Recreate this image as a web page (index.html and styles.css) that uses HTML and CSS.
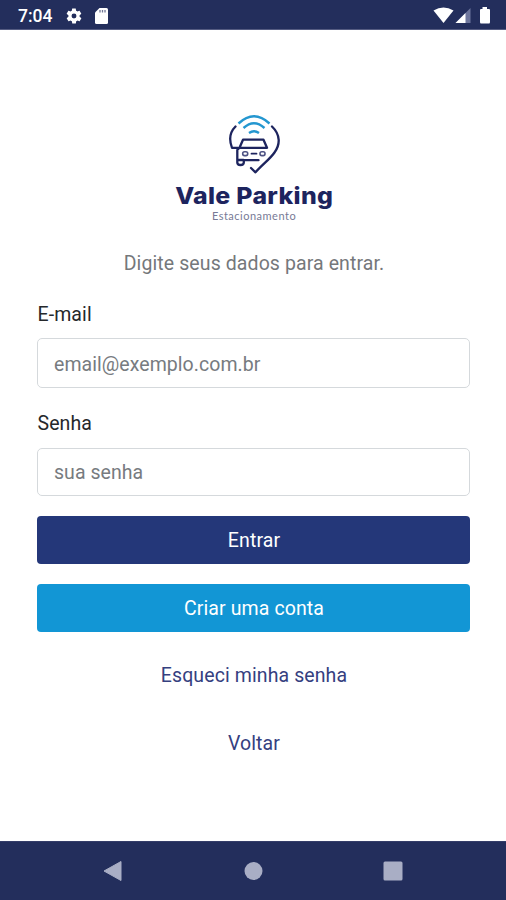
FILE: index.html
```
<!DOCTYPE html>
<html lang="pt-BR">
<head>
  <meta charset="UTF-8" />
  <meta name="viewport" content="width=device-width, initial-scale=1.0" />
  <title>Vale Parking</title>
  <link rel="stylesheet" href="styles.css">
</head>
<body>
  <div class="screen">
    <div class="status-bar">
      <span class="time">7:04</span>
      <svg class="gear" width="18" height="18" viewBox="0 0 24 24">
        <path fill="#fff" fill-rule="evenodd" d="M19.4 13c.1-.3.1-.7.1-1s0-.7-.1-1l2.1-1.6c.2-.2.2-.4.1-.6l-2-3.5c-.1-.2-.4-.3-.6-.2l-2.5 1c-.5-.4-1.1-.7-1.7-1l-.4-2.6c0-.3-.2-.5-.4-.5h-4c-.3 0-.5.2-.5.4l-.4 2.7c-.6.3-1.2.6-1.7 1l-2.5-1c-.2-.1-.5 0-.6.2l-2 3.5c-.1.2-.1.5.1.6L4.6 11c-.1.3-.1.7-.1 1s0 .7.1 1l-2.1 1.6c-.2.2-.2.4-.1.6l2 3.5c.1.2.4.3.6.2l2.5-1c.5.4 1.1.7 1.7 1l.4 2.6c0 .3.2.5.5.5h4c.2 0 .4-.2.4-.4l.4-2.7c.6-.3 1.2-.6 1.7-1l2.5 1c.2.1.5 0 .6-.2l2-3.5c.1-.2.1-.5-.1-.6zM12 15.3a3.3 3.3 0 1 1 0-6.6a3.3 3.3 0 1 1 0 6.6z" />
      </svg>
      <svg class="card" width="13" height="16" viewBox="0 0 13 16">
        <path fill="#fff" d="M4.5 0H11.5Q13 0 13 1.5V14.5Q13 16 11.5 16H1.5Q0 16 0 14.5V4.5z" />
        <path stroke="#232e5c" stroke-opacity=".65" stroke-width="1.3" d="M5 2V4.5M7.5 2V4.5M10 2V4.5" />
      </svg>
      <svg class="signals" width="58" height="18" viewBox="0 0 58 18">
        <path fill="#fff" d="M.5 3.5Q10.5 -2.5 20.5 3.5L10.5 16z" />
        <path fill="#6d759c" d="M37.5 1V16H22.5z" />
        <path fill="#fff" d="M32.5 6V16H22.5z" />
        <path fill="#fff" d="M49.5 0H54V2H56Q57 2 57 3V15Q57 16.5 56 16.5H48Q47 16.5 47 15V3Q47 2 48 2H49.5z" />
      </svg>
    </div>

    <div class="content">
      <div class="logo">
        <svg width="54" height="62" viewBox="0 0 54 62" fill="none" stroke-linecap="round" stroke-linejoin="round">
          <g stroke="#2497d0" stroke-width="2.4" stroke-linecap="butt">
            <path d="M11.5 9.5Q27 -5 42.5 9.5" />
            <path d="M16.5 14Q27 4.500 37.5 14" />
            <path d="M22 19Q27 15.500 32 19" />
          </g>
          <g stroke="#1d245e" stroke-width="2.3">
            <path d="M8.5 12.5C3 18 2 26 5 33.8H11" />
            <path d="M45 12.5C54 21 53 31 47.5 38.500C43 45 36 50 28.500 58.3L24 54" />
            <path d="M12.5 33.8L16 25.7H36.500L40 33.8H12.5L10.3 36V48.5Q10.3 51 13.5 51Q16.8 51 16.8 48.5V46.2H31.5M10.5 46H16.5" />
            <path stroke-width="1.8" d="M24.5 39.7H29.5" />
          </g>
          <g stroke="#4e5384" stroke-width="1.6">
            <rect x="15.7" y="37.800" width="5" height="3.8" rx="1.8" />
            <rect x="33" y="37.800" width="5" height="3.8" rx="1.8" />
          </g>
        </svg>
        <div class="brand">Vale Parking</div>
        <div class="tagline">Estacionamento</div>
      </div>

      <p class="intro">Digite seus dados para entrar.</p>

      <form>
        <label for="email">E-mail</label>
        <input type="email" id="email" placeholder="email@exemplo.com.br">
        <label for="senha">Senha</label>
        <input type="password" id="senha" placeholder="sua senha">
        <button class="btn btn-primary" type="submit">Entrar</button>
        <button class="btn btn-secondary" type="button">Criar uma conta</button>
      </form>

      <a href="#" class="link">Esqueci minha senha</a>
      <a href="#" class="link">Voltar</a>
    </div>

    <div class="nav-bar">
      <svg width="20" height="22" viewBox="0 0 20 22"><path fill="#a9aec5" d="M18 1.5V20.5L1 11z" stroke="#a9aec5" stroke-linejoin="round" /></svg>
      <svg width="20" height="22" viewBox="0 0 20 22"><circle cx="10.5" cy="11" r="9" fill="#a9aec5" /></svg>
      <svg width="20" height="22" viewBox="0 0 20 22"><rect x=".5" y="1.5" width="19" height="19" rx="1.5" fill="#a9aec5" /></svg>
    </div>
  </div>
</body>
</html>
```
FILE: styles.css
```
* {
  margin: 0;
  padding: 0;
  box-sizing: border-box;
}
body {
  background: #fff;
  font-family: Roboto, sans-serif;
  font-size: 19.5px;
  letter-spacing: 0.1px;
}
.screen {
  display: flex;
  flex-direction: column;
  height: 900px;
}
.status-bar {
  display: flex;
  align-items: center;
  height: 30px;
  padding: 2px 15px 0 18px;
  background: #232e5c;
  border-bottom: 1px solid #555c82;
  color: #fff;
}
.time {
  width: 47px;
  font-size: 17.5px;
  font-weight: 500;
  letter-spacing: 0;
}
.card {
  margin-left: 12px;
}
.signals {
  margin-left: auto;
}
.content {
  flex: 1;
  padding: 84px 35.5px 0 37.5px;
}
.logo {
  display: flex;
  flex-direction: column;
  align-items: center;
}
.brand {
  margin-top: 6px;
  line-height: 28px;
  font-family: Inter, sans-serif;
  font-size: 23px;
  font-weight: 800;
  letter-spacing: 0.3px;
  color: #1d245e;
  white-space: nowrap;
  transform: scaleX(1.08);
}
.tagline {
  line-height: 12px;
  font-family: Lato, sans-serif;
  font-size: 11px;
  letter-spacing: 0.5px;
  color: #777a96;
}
.intro {
  margin-top: 30px;
  line-height: 24px;
  text-align: center;
  color: #75787b;
}
form {
  display: flex;
  flex-direction: column;
  margin: 27px 0.5px 0 -0.5px;
}
label {
  line-height: 24px;
  margin-bottom: 11px;
  padding-left: 0.5px;
  color: #25282b;
}
input {
  height: 50px;
  padding: 2px 16px 0;
  margin-bottom: 24px;
  border: 1px solid #d5d9dc;
  border-radius: 5px;
  font: inherit;
  letter-spacing: 0.05px;
}
#senha {
  height: 48px;
  padding-top: 0;
  margin-bottom: 20px;
}
label[for="senha"] {
  margin-bottom: 12px;
}
input::placeholder {
  color: #777b80;
}
.btn {
  height: 48px;
  padding-left: 1px;
  border: none;
  border-radius: 4px;
  font: inherit;
  letter-spacing: inherit;
  color: #fff;
}
.btn-primary {
  margin-bottom: 20px;
  background: #243779;
}
.btn-secondary {
  background: #1296d5;
}
.link {
  display: block;
  height: 24px;
  line-height: 24px;
  margin-top: 32px;
  text-align: center;
  text-decoration: none;
  color: #35407f;
}
.link + .link {
  margin-top: 44px;
}
.nav-bar {
  display: flex;
  align-items: center;
  justify-content: center;
  gap: 120px;
  height: 59px;
  background: #232e5c;
  border-top: 1px solid #343d69;
}
```
